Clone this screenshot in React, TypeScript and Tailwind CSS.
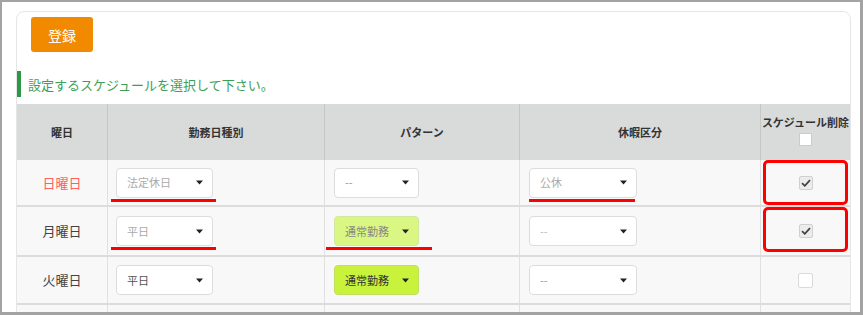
import React from "react";

const font = { fontFamily: '"Noto Sans CJK JP", "Noto Sans", sans-serif' };

function Arrow() {
  return (
    <svg width="7" height="5" viewBox="0 0 7 5" className="shrink-0">
      <path d="M0 0.5 L7 0.5 L3.5 4.5 Z" fill="#222" />
    </svg>
  );
}

function Select({
  text,
  w,
  bg = "bg-white",
  textCls = "text-[#aaaaaa]",
  border = "border-[#dcdcdc]",
  underline,
}: {
  text: string;
  w: string;
  bg?: string;
  textCls?: string;
  border?: string;
  underline?: { left: string; width: string };
}) {
  return (
    <div className="relative">
      <div
        className={`${w} ${bg} ${border} h-[30px] border rounded-[4px] flex items-center justify-between pl-[10px] pr-[9px]`}
      >
        <span className={`text-[11px] leading-none ${textCls}`}>{text}</span>
        <Arrow />
      </div>
      {underline && (
        <div
          className={`absolute top-[31px] h-[3px] bg-[#ff0000] ${underline.left} ${underline.width}`}
        />
      )}
    </div>
  );
}

function Check({ checked }: { checked: boolean }) {
  return checked ? (
    <div className="w-[14px] h-[14px] rounded-[2px] border border-[#d0d0d0] bg-[#ececec] flex items-center justify-center">
      <svg width="10" height="8" viewBox="0 0 10 8">
        <path d="M1 4.2 L3.8 6.8 L9 1.2" stroke="#444" strokeWidth="1.8" fill="none" />
      </svg>
    </div>
  ) : (
    <div className="w-[15px] h-[15px] rounded-[2px] border border-[#dadada] bg-white" />
  );
}

type Row = {
  day: string;
  dayCls: string;
  h: string;
  kind: React.ReactNode;
  pattern: React.ReactNode;
  rest: React.ReactNode;
  checked: boolean;
  boxed: boolean;
};

export default function App() {
  const rows: Row[] = [
    {
      day: "日曜日",
      dayCls: "text-[#ff6060]",
      h: "h-[47px]",
      kind: (
        <Select
          text="法定休日"
          w="w-[97px]"
          underline={{ left: "-left-[5px]", width: "w-[105px]" }}
        />
      ),
      pattern: <Select text="--" w="w-[85px]" textCls="text-[#999999]" />,
      rest: (
        <Select
          text="公休"
          w="w-[108px]"
          underline={{ left: "left-0", width: "w-[106px]" }}
        />
      ),
      checked: true,
      boxed: true,
    },
    {
      day: "月曜日",
      dayCls: "text-[#444444]",
      h: "h-[50px]",
      kind: (
        <Select
          text="平日"
          w="w-[97px]"
          underline={{ left: "-left-[5px]", width: "w-[105px]" }}
        />
      ),
      pattern: (
        <Select
          text="通常勤務"
          w="w-[85px]"
          bg="bg-[#dbf783]"
          border="border-[#d0e8a0]"
          textCls="text-[#888888]"
          underline={{ left: "-left-[8px]", width: "w-[106px]" }}
        />
      ),
      rest: <Select text="--" w="w-[108px]" textCls="text-[#bbbbbb]" />,
      checked: true,
      boxed: true,
    },
    {
      day: "火曜日",
      dayCls: "text-[#444444]",
      h: "h-[48px]",
      kind: <Select text="平日" w="w-[97px]" textCls="text-[#555555]" />,
      pattern: (
        <Select
          text="通常勤務"
          w="w-[85px]"
          bg="bg-[#c8f23c]"
          border="border-[#c0e060]"
          textCls="text-[#333333]"
        />
      ),
      rest: <Select text="--" w="w-[108px]" textCls="text-[#999999]" />,
      checked: false,
      boxed: false,
    },
  ];

  const cols = "grid grid-cols-[90px_217px_195px_241px_90px]";

  return (
    <div
      style={font}
      className="w-[863px] h-[315px] overflow-hidden bg-white border-t-2 border-l-2 border-r-[3px] border-b-[3px] border-[#a3a3a3]"
    >
      <div className="ml-[14px] mt-[9px] w-[835px] h-[400px] border border-[#e6e6e6] rounded-t-[8px] bg-white">
        <div className="ml-[14px] mt-[5px] w-[62px] h-[35px] rounded-[3px] bg-[#f28a00] flex items-center justify-center">
          <span className="text-white text-[14px] leading-none">登録</span>
        </div>

        <div className="mt-[19px] flex items-center h-[26px]">
          <div className="w-[4px] h-[26px] bg-[#2a9a46]" />
          <span className="ml-[7px] text-[13px] leading-none text-[#3f9e55]">
            設定するスケジュールを選択して下さい。
          </span>
        </div>

        <div className="mt-[7px] w-[833px]">
          <div className={`${cols} h-[56px] bg-[#d9dada] text-[11px] font-bold text-[#333333]`}>
            <div className="flex items-center justify-center">曜日</div>
            <div className="flex items-center justify-center border-l border-[#c6c6c6]">勤務日種別</div>
            <div className="flex items-center justify-center border-l border-[#c6c6c6]">パターン</div>
            <div className="flex items-center justify-center border-l border-[#c6c6c6]">休暇区分</div>
            <div className="flex flex-col items-center justify-center border-l border-[#c6c6c6] gap-[5px] pb-[2px]">
              <span className="leading-none">スケジュール削除</span>
              <div className="w-[13px] h-[13px] bg-white border border-[#cccccc]" />
            </div>
          </div>

          {rows.map((r, i) => (
            <div
              key={i}
              className={`${cols} ${r.h} bg-[#f8f8f8] border-b-2 border-[#dcdcdc]`}
            >
              <div className={`flex items-center justify-center text-[13px] ${r.dayCls}`}>
                {r.day}
              </div>
              <div className="flex items-center pl-[8px] border-l border-[#e0e0e0]">{r.kind}</div>
              <div className="flex items-center pl-[9px] border-l border-[#e0e0e0]">{r.pattern}</div>
              <div className="flex items-center pl-[9px] border-l border-[#e0e0e0]">{r.rest}</div>
              <div className="relative flex items-center justify-center border-l border-[#e0e0e0]">
                {r.boxed && (
                  <div className="absolute top-0 left-[2px] right-[2px] h-[45px] rounded-[5px] border-[3px] border-[#ff0000]" />
                )}
                <Check checked={r.checked} />
              </div>
            </div>
          ))}
          <div className={`${cols} h-[40px] bg-[#f8f8f8]`}>
            <div />
            <div className="border-l border-[#e0e0e0]" />
            <div className="border-l border-[#e0e0e0]" />
            <div className="border-l border-[#e0e0e0]" />
            <div className="border-l border-[#e0e0e0]" />
          </div>
        </div>
      </div>
    </div>
  );
}
